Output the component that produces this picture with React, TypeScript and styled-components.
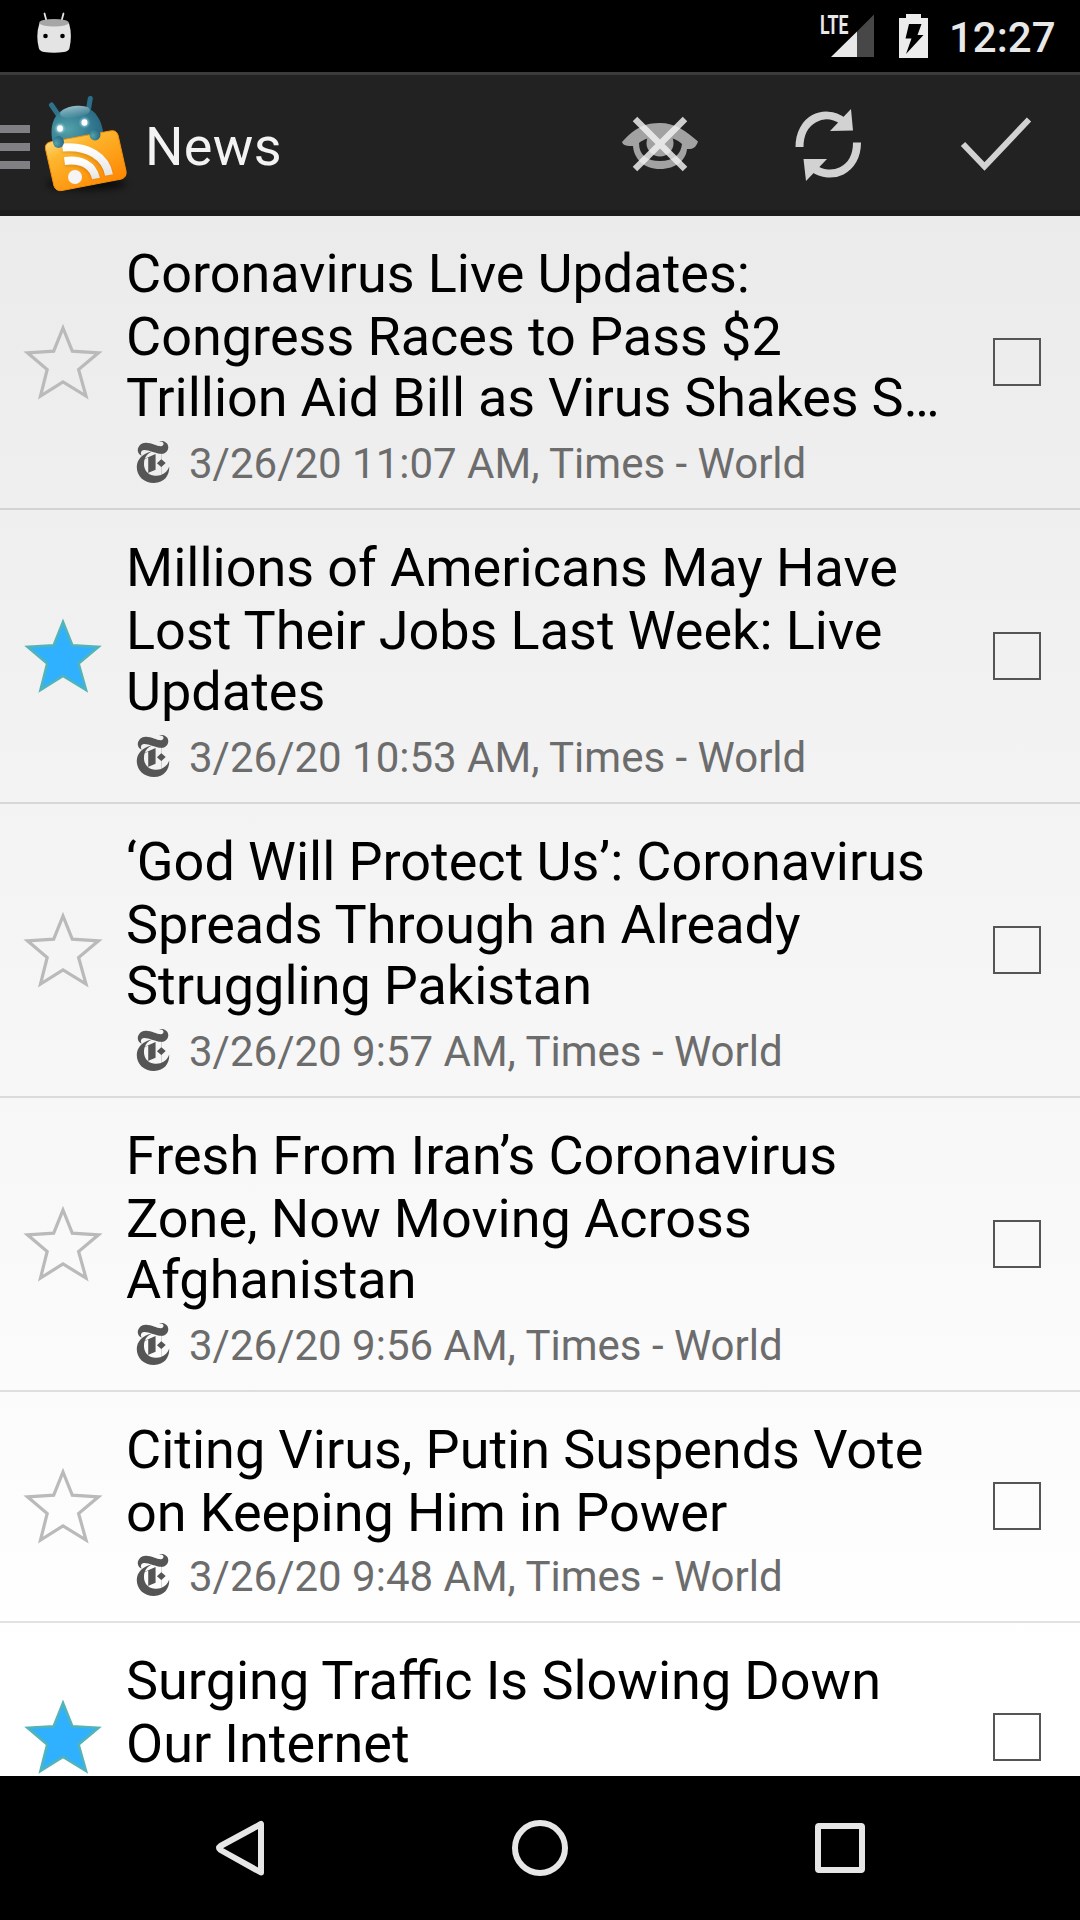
import React from 'react';
import styled, { createGlobalStyle } from 'styled-components';
import { SiNewyorktimes } from 'react-icons/si';

const GlobalStyle = createGlobalStyle`
  * { box-sizing: border-box; }
  body { margin: 0; background: #000; font-family: Roboto, "Noto Sans", sans-serif; }
  svg { display: block; flex: none; }
`;

const Screen = styled.div`
  width: 1080px;
  height: 1920px;
  display: flex;
  flex-direction: column;
  overflow: hidden;
`;

const StatusBar = styled.header`
  height: 72px;
  flex: none;
  background: #000;
  display: flex;
  justify-content: space-between;
  padding: 0 25px 0 36px;
`;

const StatusTray = styled.div`
  display: flex;
`;

const Clock = styled.span`
  width: 106px;
  margin-left: 20px;
  color: #e8e8e8;
  font-size: 42px;
  font-weight: 500;
  line-height: 75px;
  white-space: nowrap;
`;

const ActionBar = styled.nav`
  height: 144px;
  flex: none;
  display: flex;
  align-items: center;
  background: #222;
  border-top: 3px solid #3b3b3b;
  border-bottom: 6px solid #1b1b1b;
`;

const DrawerHandle = styled.div`
  width: 30px;
  height: 44px;
  display: flex;
  flex-direction: column;
  justify-content: space-between;
  margin-top: 8px;
`;

const DrawerBar = styled.i`
  height: 8px;
  background: #808084;
`;

const AppIcon = styled.svg`
  margin: 3px 0 0 6px;
`;

const Heading = styled.h1`
  flex: 1;
  margin: 9px 0 0 1px;
  font-size: 54px;
  font-weight: 400;
  line-height: 64px;
  letter-spacing: 0.3px;
  color: #f3f3f3;
`;

const Action = styled.button`
  width: 168px;
  height: 135px;
  border: 0;
  padding: 0;
  background: none;
`;

const List = styled.main`
  flex: 1;
  min-height: 0;
  overflow: hidden;
  background: linear-gradient(#ebebeb, #ffffff 94%);
`;

const Row = styled.article<{ $lines: number }>`
  height: ${(p) => (p.$lines === 3 ? 294 : 231)}px;
  padding-bottom: ${(p) => (p.$lines === 3 ? 0 : 1)}px;
  display: flex;
  align-items: center;
  border-bottom: 2px solid rgba(0, 0, 0, 0.115);
`;

const Story = styled.div`
  width: 867px;
  height: 100%;
  padding-top: 26px;
`;

const Title = styled.h2`
  margin: 0;
  font-size: 54px;
  font-weight: 400;
  word-spacing: -0.25px;
  color: #000;
`;

const TitleLine = styled.span`
  display: block;
  height: 63px;
  line-height: 63px;
  white-space: nowrap;
  &:nth-child(3) {
    height: 61px;
    line-height: 59px;
    word-spacing: -0.6px;
  }
`;

const Meta = styled.p<{ $lines: number }>`
  display: flex;
  align-items: center;
  margin: ${(p) => (p.$lines === 3 ? 9 : 7)}px 0 0 6px;
  height: 52px;
  color: #6c6c6c;
  font-size: 42px;
  line-height: 52px;
  white-space: nowrap;
`;

const SourceIcon = styled(SiNewyorktimes)`
  width: 42px;
  height: 42px;
  margin-right: 15px;
  margin-top: -5px;
  color: #555;
`;

const Check = styled.span`
  width: 48px;
  height: 48px;
  border: 2px solid #555;
`;

const NavBar = styled.footer`
  height: 144px;
  flex: none;
  background: #000;
  display: flex;
  justify-content: center;
  align-items: center;
`;

const NavKey = styled.svg`
  width: 300px;
  height: 144px;
`;

const Star = ({ on }: { on?: boolean }) => (
  <svg width="126" height="76" viewBox="0 -1 126 76">
    <polygon
      points="63,3 72.3,26.2 98.5,27.8 78.6,44.5 86,71 63,57 40.5,71 47.2,44.500 27.5,27.8 53.7,26.2"
      fill={on ? '#30b1ff' : 'none'}
      stroke={on ? '#52b4b8' : '#bababa'}
      strokeWidth={on ? 2.6 : 3.2}
    />
  </svg>
);

const stories = [
  { lines: ['Coronavirus Live Updates:', 'Congress Races to Pass $2', 'Trillion Aid Bill as Virus Shakes S…'], time: '11:07 AM', on: false },
  { lines: ['Millions of Americans May Have', 'Lost Their Jobs Last Week: Live', 'Updates'], time: '10:53 AM', on: true },
  { lines: ['‘God Will Protect Us’: Coronavirus', 'Spreads Through an Already', 'Struggling Pakistan'], time: '9:57 AM', on: false },
  { lines: ['Fresh From Iran’s Coronavirus', 'Zone, Now Moving Across', 'Afghanistan'], time: '9:56 AM', on: false },
  { lines: ['Citing Virus, Putin Suspends Vote', 'on Keeping Him in Power'], time: '9:48 AM', on: false },
  { lines: ['Surging Traffic Is Slowing Down', 'Our Internet'], time: '', on: true },
];

const Logo = () => (
  <AppIcon width="108" height="108" viewBox="36 90 108 108">
    <defs>
      <radialGradient id="head" cx="0.3" cy="0.6" r="0.75">
        <stop offset="0" stopColor="#55a3aa" />
        <stop offset="0.55" stopColor="#357f94" />
        <stop offset="1" stopColor="#286580" />
      </radialGradient>
      <linearGradient id="shine" x1="0" y1="0" x2="0" y2="1">
        <stop offset="0" stopColor="#b5d5dc" stopOpacity="0.75" />
        <stop offset="1" stopColor="#b5d5dc" stopOpacity="0" />
      </linearGradient>
      <linearGradient id="folder" x1="0" y1="0" x2="0.75" y2="1">
        <stop offset="0" stopColor="#ffeaa4" />
        <stop offset="0.35" stopColor="#fdb62e" />
        <stop offset="1" stopColor="#ff8500" />
      </linearGradient>
      <linearGradient id="wave" x1="0" y1="0" x2="0" y2="1">
        <stop offset="0" stopColor="#fff" />
        <stop offset="1" stopColor="#e4e4e4" />
      </linearGradient>
      <filter id="soft" x="-30%" y="-100%" width="160%" height="300%">
        <feGaussianBlur stdDeviation="3.5" />
      </filter>
      <filter id="glow" x="-100%" y="-100%" width="300%" height="300%">
        <feGaussianBlur stdDeviation="1.2" />
      </filter>
    </defs>
    <ellipse cx="86" cy="184" rx="40" ry="6" fill="#000" opacity="0.65" filter="url(#soft)" />
    <path d="M51.5 105 L59 116" stroke="#2f7289" strokeWidth="5" strokeLinecap="round" />
    <path d="M90.3 98.5 L88 112" stroke="#2b6f8a" strokeWidth="5" strokeLinecap="round" />
    <path d="M52.500 142 C48.500 121 57 108.500 74 106 C90 104 102 115 103.500 136 L100 145 Z" fill="url(#head)" />
    <ellipse cx="75" cy="112" rx="15" ry="6" transform="rotate(-8 75 112)" fill="url(#shine)" />
    <circle cx="60" cy="128.5" r="4.4" fill="#b9e1ef" opacity="0.7" filter="url(#glow)" />
    <circle cx="84.5" cy="122.5" r="4.4" fill="#b9e1ef" opacity="0.7" filter="url(#glow)" />
    <ellipse cx="60" cy="128.5" rx="2.9" ry="3.3" fill="#fff" />
    <ellipse cx="84.5" cy="122.5" rx="2.9" ry="3.3" fill="#fff" />
    <path d="M50 142 L110 131 Q116 129.500 118 135 L126 171 Q127 177 121.500 179 L62 190.500 Q56 191.500 54 186 L45.500 149 Q44.500 143.500 50 142 Z" fill="url(#folder)" stroke="#f79008" strokeWidth="1" />
    <g transform="translate(0 1)" opacity="0.25" stroke="#a85c00" fill="none" strokeWidth="9.5" filter="url(#glow)">
      <path d="M64.500 161 Q91 160 96 178" />
      <path d="M62 147 Q101 148 109 174" />
    </g>
    <g stroke="url(#wave)" fill="none" strokeWidth="8">
      <path d="M64.500 161 C82 159 93 165 96 178.500" />
      <path d="M62.500 147.500 C88 145 106 157 109 175" />
    </g>
    <circle cx="75" cy="177" r="7" fill="#f5f5f5" />
    <ellipse cx="58.500" cy="142" rx="5.500" ry="6" fill="url(#head)" />
    <ellipse cx="95" cy="134.500" rx="5.500" ry="6" fill="url(#head)" />
  </AppIcon>
);

export default function App() {
  return (
    <Screen>
      <GlobalStyle />
      <StatusBar>
        <svg width="36" height="72" viewBox="36 0 36 72">
          <path d="M44.500 13.500 L46.500 21 M63.500 13.500 L61.500 21" stroke="#e4e4e4" strokeWidth="1.8" strokeLinecap="round" />
          <path d="M39.500 23 Q54 28 69 23 Q72.500 35 69.500 48 Q69 51 64 52 Q54 53.500 44 52 Q39.500 51 38.800 48 Q35.500 35 39.500 23Z" fill="#e4e4e4" />
          <ellipse cx="54" cy="22.700" rx="14.800" ry="3.800" fill="#a6a6a6" />
          <circle cx="45.500" cy="36" r="2.300" fill="#000" />
          <circle cx="62.500" cy="36" r="2.300" fill="#000" />
        </svg>
        <StatusTray>
          <svg width="109" height="72" viewBox="820 0 109 72">
            <text x="820" y="33.500" fill="#e8e8e8" fontFamily="Roboto" fontWeight="700" fontSize="26" textLength="28.500" lengthAdjust="spacingAndGlyphs">LTE</text>
            <path d="M831 57 L857 31.500 V57Z" fill="#e8e8e8" />
            <path d="M857 31.500 L874 14.500 V57 H857Z" fill="#474747" />
            <path d="M906 14 H921 V18 H928 V58 H899 V18 H906Z" fill="#ececec" />
            <path d="M909 24 H921.500 L917.500 35 H923.500 L906 54 L911.500 38.500 H905.500Z" fill="#000" />
          </svg>
          <Clock>12:27</Clock>
        </StatusTray>
      </StatusBar>
      <ActionBar>
        <DrawerHandle>
          <DrawerBar />
          <DrawerBar />
          <DrawerBar />
        </DrawerHandle>
        <Logo />
        <Heading>News</Heading>
        <Action aria-label="Hide read">
          <svg width="168" height="135" viewBox="576 75 168 135">
            <path fillRule="evenodd" fill="#a2a2a2" d="M622 142 C635 127 646 123 660 123 C675 123 686 131 698 141.500 C696 148 692 149.500 687 149 C686 160 676 169 660 169 C644 169 634 159 633 146 C628 146 623 146 622 142Z M639 143 C639 155 647 161 660 161 C674 161 681 154 682 144 C676 138 669 137 660 137 C650 137 644 139 639 143Z" />
            <circle cx="660" cy="143" r="13.500" fill="#a2a2a2" />
            <path d="M635 119 L685 169 M685 119 L635 169" stroke="#f4f4f4" strokeOpacity="0.82" strokeWidth="6.400" />
          </svg>
        </Action>
        <Action aria-label="Refresh">
          <svg width="168" height="135" viewBox="744 75 168 135">
            <g fill="none" stroke="#d2d2d2" strokeWidth="8">
              <path d="M799.500 147 C799.500 119 824 108 843 121" />
              <path d="M857 142.500 C857 171 831 181 813 168" />
            </g>
            <path d="M851 109 L853 130.500 L830 131 Z" fill="#d2d2d2" />
            <path d="M803.500 159 L827 159 L806 181 Z" fill="#d2d2d2" />
          </svg>
        </Action>
        <Action aria-label="Mark all read">
          <svg width="168" height="135" viewBox="912 75 168 135">
            <path d="M963 144 L984.500 166.500 L1029 119.500" fill="none" stroke="#d2d2d2" strokeWidth="6" />
          </svg>
        </Action>
      </ActionBar>
      <List>
        {stories.map((s) => (
          <Row key={s.lines[0]} $lines={s.lines.length}>
            <Star on={s.on} />
            <Story>
              <Title>
                {s.lines.map((l) => (
                  <TitleLine key={l}>{l}</TitleLine>
                ))}
              </Title>
              {s.time && (
                <Meta $lines={s.lines.length}>
                  <SourceIcon />
                  3/26/20 {s.time}, Times - World
                </Meta>
              )}
            </Story>
            <Check />
          </Row>
        ))}
      </List>
      <NavBar>
        <NavKey viewBox="90 1776 300 144">
          <path d="M261 1824 V1872.500 L220.500 1850 Q217.500 1848 220.500 1846 Z" fill="none" stroke="#e6e6e6" strokeWidth="6" strokeLinejoin="round" />
        </NavKey>
        <NavKey viewBox="390 1776 300 144">
          <circle cx="540" cy="1848" r="25" fill="none" stroke="#e6e6e6" strokeWidth="6" />
        </NavKey>
        <NavKey viewBox="690 1776 300 144">
          <rect x="818" y="1826" width="44" height="44" rx="1" fill="none" stroke="#e6e6e6" strokeWidth="6" strokeLinejoin="round" />
        </NavKey>
      </NavBar>
    </Screen>
  );
}
